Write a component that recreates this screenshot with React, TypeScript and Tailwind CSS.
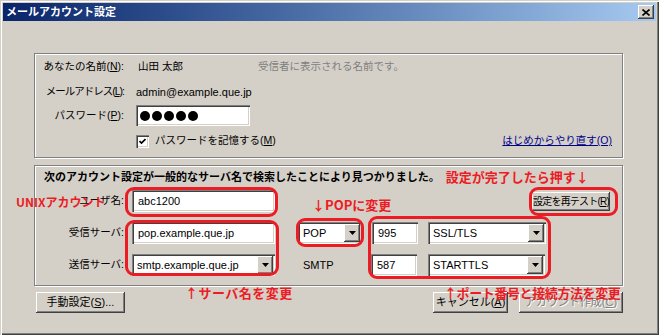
const raised =
  "bg-[#d4d0c8] shadow-[inset_-1px_-1px_0_#404040,inset_1px_1px_0_#fff,inset_-2px_-2px_0_#808080]";
const sunken =
  "bg-white shadow-[inset_1px_1px_0_#808080,inset_2px_2px_0_#404040,inset_-1px_-1px_0_#fff,inset_-2px_-2px_0_#d4d0c8]";
const etched = "border border-[#808080] shadow-[inset_1px_1px_0_#fff,1px_1px_0_#fff]";
const red = "text-[#ec1c24] font-bold font-['Noto_Sans_CJK_JP',sans-serif]";
const outline = "absolute border-[3px] border-[#ec1c24] rounded-[9px]";

function Arrow() {
  return (
    <svg width="7" height="4" viewBox="0 0 7 4">
      <path d="M0 0h7L3.5 4z" fill="#000" />
    </svg>
  );
}

function Field({ value, className }: { value: string; className: string }) {
  return (
    <div className={`flex items-center h-[22px] pl-[6px] text-[11px] ${sunken} ${className}`}>
      {value}
    </div>
  );
}

function Combo({ value, className }: { value: string; className: string }) {
  return (
    <div className={`flex items-center h-[22px] pl-[5px] pr-[2px] text-[11px] ${sunken} ${className}`}>
      <span>{value}</span>
      <div className={`ml-auto w-[16px] h-[18px] flex items-center justify-center ${raised}`}>
        <Arrow />
      </div>
    </div>
  );
}

export default function App() {
  return (
    <div className="relative w-[659px] h-[335px] bg-[#d4d0c8] p-[3px] flex flex-col overflow-hidden whitespace-nowrap text-black font-['Liberation_Sans','Noto_Sans_CJK_JP',sans-serif] shadow-[inset_1px_1px_0_#d4d0c8,inset_2px_2px_0_#fff,inset_-1px_-1px_0_#404040,inset_-2px_-2px_0_#808080]">
      {/* Title bar */}
      <div className="h-[18px] flex items-center pl-[3px] pr-[2px] bg-linear-to-r from-[#0a246a] to-[#a6caf0]">
        <span className="text-white font-bold text-[11px]">メールアカウント設定</span>
        <div className={`ml-auto w-[16px] h-[14px] flex items-center justify-center ${raised}`}>
          <svg width="8" height="7" viewBox="0 0 8 7">
            <path d="M0.5 0.5L7.5 6.5M7.5 0.5L0.5 6.5" stroke="#000" strokeWidth="1.6" />
          </svg>
        </div>
      </div>

      <div className="pl-[31px] pt-[32px]">
        {/* Group 1 */}
        <div className={`w-[589px] h-[105px] pt-[3px] text-[10.5px] ${etched}`}>
          <div className="flex items-center h-[20px]">
            <div className="w-[89px] flex justify-end">あなたの名前(<u>N</u>):</div>
            <div className="ml-[14px] w-[120px]">山田 太郎</div>
            <div className="text-[#808080]">受信者に表示される名前です。</div>
          </div>
          <div className="flex items-center h-[20px] mt-[5px]">
            <div className="w-[89px] flex justify-end tracking-[-1px]">メールアドレス(<u>L</u>):</div>
            <div className="ml-[12px] text-[11px]">admin@example.que.jp</div>
          </div>
          <div className="flex items-center h-[21px] mt-[3px]">
            <div className="w-[89px] flex justify-end">パスワード(<u>P</u>):</div>
            <div className={`ml-[12px] w-[114px] h-[21px] flex items-center gap-[2px] pl-[4px] ${sunken}`}>
              <span className="w-[10px] h-[10px] rounded-full bg-black" />
              <span className="w-[10px] h-[10px] rounded-full bg-black" />
              <span className="w-[10px] h-[10px] rounded-full bg-black" />
              <span className="w-[10px] h-[10px] rounded-full bg-black" />
              <span className="w-[10px] h-[10px] rounded-full bg-black" />
            </div>
          </div>
          <div className="flex items-center h-[16px] mt-[7px]">
            <div className="w-[89px]" />
            <div className={`ml-[12px] w-[13px] h-[13px] flex items-center justify-center ${sunken}`}>
              <svg width="7" height="7" viewBox="0 0 7 7">
                <path d="M0.5 3L2.5 5L6.5 1" stroke="#000" strokeWidth="1.7" fill="none" />
              </svg>
            </div>
            <div className="ml-[6px]">パスワードを記憶する(<u>M</u>)</div>
            <div className="ml-auto mr-[10px] text-[#00008b] underline">はじめからやり直す(O)</div>
          </div>
        </div>

        {/* Group 2 */}
        <div className={`mt-[7px] w-[589px] h-[121px] pt-[4px] text-[10.5px] ${etched}`}>
          <div className="flex items-center h-[14px] pl-[9px]">
            <span className="font-bold text-[11px]">
              次のアカウント設定が一般的なサーバ名で検索したことにより見つかりました。
            </span>
            <span className={`ml-[6px] text-[13px] ${red}`}>設定が完了したら押す↓</span>
          </div>
          <div className="flex items-center h-[22px] mt-[6px]">
            <div className="w-[89px] flex justify-end">ユーザ名:</div>
            <Field value="abc1200" className="ml-[8px] w-[143px]" />
            <div
              className={`ml-auto mr-[12px] w-[78px] h-[19px] flex items-center justify-center text-[10px] tracking-[-0.8px] ${raised}`}
            >
              設定を再テスト(<u>R</u>)
            </div>
          </div>
          <div className="flex items-center h-[22px] mt-[10px]">
            <div className="w-[89px] flex justify-end">受信サーバ:</div>
            <Field value="pop.example.que.jp" className="ml-[8px] w-[143px]" />
            <Combo value="POP" className="ml-[23px] w-[64px]" />
            <Field value="995" className="ml-[10px] w-[46px]" />
            <Combo value="SSL/TLS" className="ml-[10px] w-[118px]" />
          </div>
          <div className="flex items-center h-[22px] mt-[10px]">
            <div className="w-[89px] flex justify-end">送信サーバ:</div>
            <Combo value="smtp.example.que.jp" className="ml-[8px] w-[143px]" />
            <div className="ml-[23px] w-[64px] pl-[5px] text-[11px]">SMTP</div>
            <Field value="587" className="ml-[9px] w-[46px]" />
            <Combo value="STARTTLS" className="ml-[11px] w-[117px]" />
          </div>
        </div>

        {/* Buttons */}
        <div className="flex mt-[6px] text-[11px]">
          <div className={`ml-[2px] w-[89px] h-[21px] flex items-center justify-center ${raised}`}>
            手動設定(<u>S</u>)...
          </div>
          <div className={`ml-[308px] w-[75px] h-[21px] flex items-center justify-center ${raised}`}>
            キャンセル(<u>A</u>)
          </div>
          <div
            className={`ml-[11px] w-[104px] h-[21px] flex items-center justify-center text-[#808080] [text-shadow:1px_1px_0_#fff] ${raised}`}
          >
            アカウント作成(<u>C</u>)
          </div>
        </div>
      </div>

      {/* Red annotations */}
      <div className={`${outline} left-[125px] top-[187px] w-[153px] h-[30px]`} />
      <div className={`${outline} left-[125px] top-[220px] w-[154px] h-[56px]`} />
      <div className={`${outline} left-[529px] top-[187px] w-[89px] h-[29px]`} />
      <div className={`${outline} left-[296px] top-[218px] w-[68px] h-[29px]`} />
      <div className={`${outline} left-[368px] top-[216px] w-[183px] h-[63px]`} />
      <div className={`absolute left-[16px] top-[194px] text-[12px] leading-[16px] ${red}`}>UNIXアカウント</div>
      <div className={`absolute left-[312px] top-[196px] text-[13px] leading-[18px] ${red}`}>↓POPに変更</div>
      <div className={`absolute left-[185px] top-[284px] text-[13px] leading-[18px] tracking-[0.5px] ${red}`}>
        ↑サーバ名を変更
      </div>
      <div className={`absolute left-[444px] top-[284px] text-[13px] leading-[18px] tracking-[-0.4px] ${red}`}>
        ↑ポート番号と接続方法を変更
      </div>
    </div>
  );
}
